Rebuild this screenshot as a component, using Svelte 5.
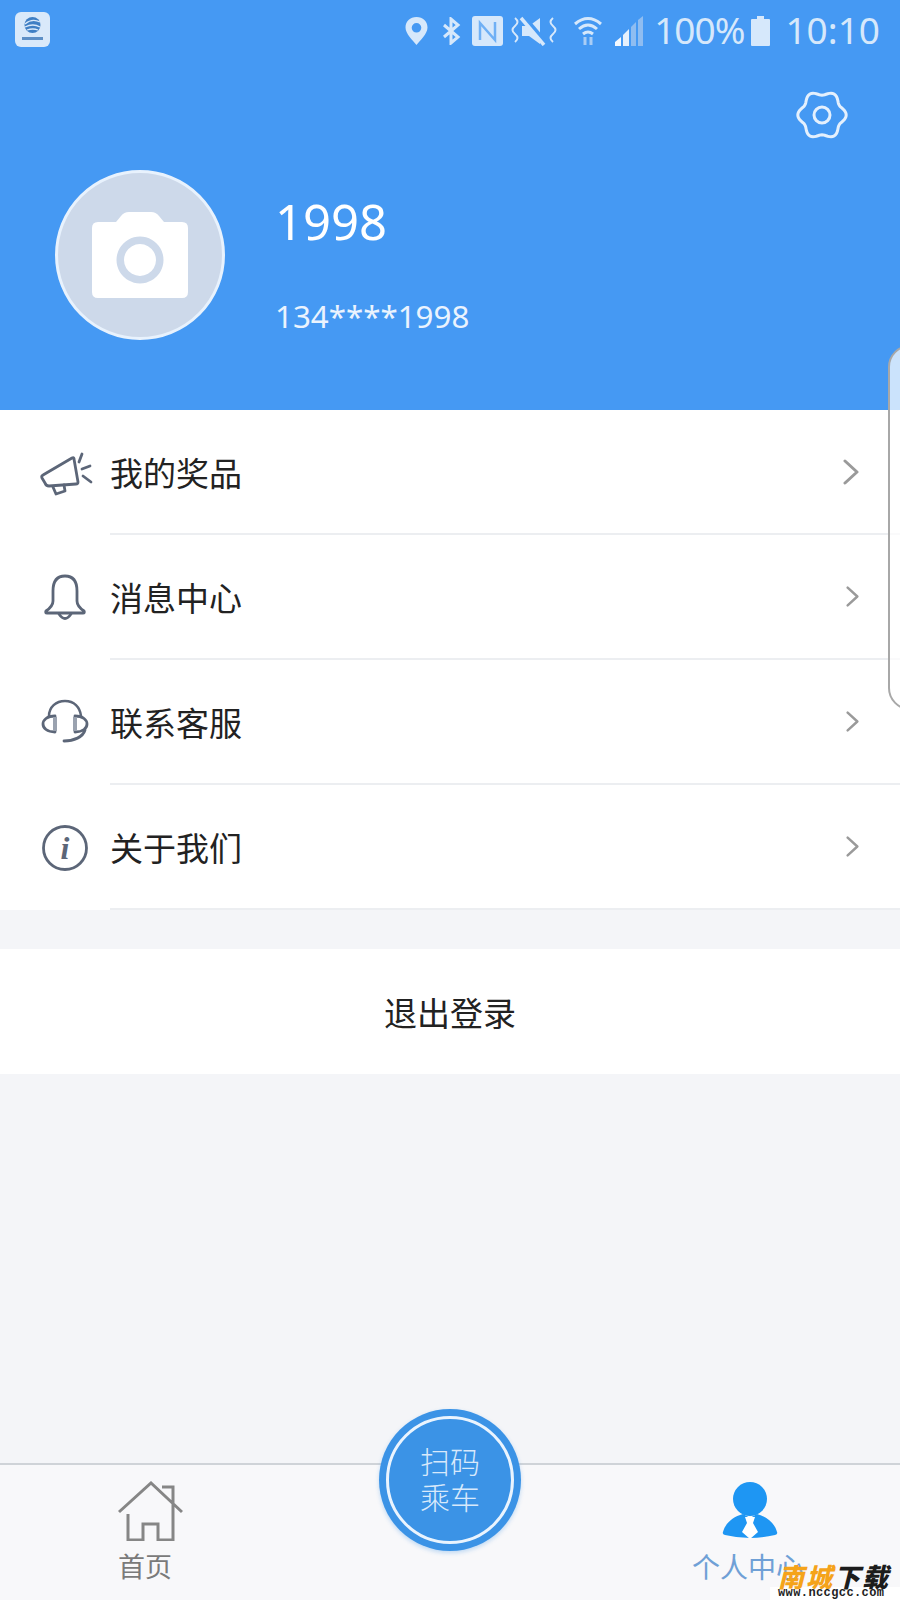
<script>
  const menu = [
    { label: '我的奖品', icon: 'horn', big: true },
    { label: '消息中心', icon: 'bell' },
    { label: '联系客服', icon: 'headset' },
    { label: '关于我们', icon: 'info' }
  ];

  // wavy outline of the settings gear
  function gearPath() {
    let d = '';
    for (let i = 0; i < 96; i++) {
      const a = (i / 96) * Math.PI * 2;
      const r = 22 + 2.2 * Math.cos(6 * a);
      d += (i ? 'L' : 'M') + (26 + r * Math.cos(a)).toFixed(2) + ' ' + (26 + r * Math.sin(a)).toFixed(2);
    }
    return d + 'Z';
  }
</script>

<div class="page">
  <header class="header">
    <div class="status">
      <div class="app-icon">
        <svg viewBox="0 0 35 35" width="35" height="35">
          <circle cx="17.500" cy="13" r="8" fill="#3f7fc4" />
          <path d="M10 12q7-6 15-2M10 15q8-4 15 0M12 18q6-2 11 0" stroke="#d9e9fa" stroke-width="1.300" fill="none" />
          <rect x="7" y="25" width="21" height="3" fill="#5d8fc6" />
        </svg>
      </div>
      <div class="status-right">
        <svg class="pin" viewBox="0 0 23 28" width="23" height="28">
          <path fill-rule="evenodd" d="M11.5 0C5 0 .5 4.6.5 10.5.5 17 8 23.500 11.500 28 15 23.500 22.500 17 22.500 10.500 22.500 4.600 18 0 11.500 0ZM11.500 6A4.800 4.800 0 1 1 11.500 15.600 4.800 4.800 0 0 1 11.500 6Z" fill="#d6e8fb" />
        </svg>
        <svg class="bt" viewBox="0 0 20 28" width="20" height="28">
          <path d="M3 8l14 12-7 6V2l7 6L3 20" fill="none" stroke="#d6e8fb" stroke-width="3" />
        </svg>
        <svg class="nfc" viewBox="0 0 31 30" width="31" height="30">
          <rect width="31" height="30" rx="3" fill="#d6e8fb" />
          <path d="M8 24V7l15 17V6" fill="none" stroke="#6fb0f5" stroke-width="2.500" />
        </svg>
        <svg class="mute" viewBox="0 0 46 30" width="46" height="30">
          <path d="M4 2q5 4 0 8t0 8 0 8M42 2q-5 4 0 8t0 8 0 8" fill="none" stroke="#d6e8fb" stroke-width="2" />
          <path d="M11 10h7l11-8v26l-11-8h-7Z" fill="#d6e8fb" />
          <path d="M12 1l22 26" stroke="#4599f3" stroke-width="6" />
          <path d="M10 2l23 27" stroke="#d6e8fb" stroke-width="3.500" />
        </svg>
        <svg class="wifi" viewBox="0 0 28 30" width="28" height="30">
          <path d="M1 8q13-11 26 0M5 13q9-8 18 0M9 18q5-4 10 0" fill="none" stroke="#d6e8fb" stroke-width="3" />
          <path d="M11 21v8M17 21v8" stroke="#a9cdf5" stroke-width="3" />
        </svg>
        <svg class="signal" viewBox="0 0 30 30" width="30" height="30">
          <path d="M0 30v-4l6-5v9Z" fill="#f3f8fe" />
          <path d="M8 30V19l6-6v17Z" fill="#e6f0fc" />
          <path d="M16 30V11l5-5v24Z" fill="#8fbdf1" />
          <path d="M23 30V4l5-4v30Z" fill="#8fbdf1" />
        </svg>
        <span class="pct">100%</span>
        <svg class="battery" viewBox="0 0 19 30" width="19" height="30">
          <path d="M6 0h7v3h5a1 1 0 0 1 1 1v25a1 1 0 0 1-1 1H1a1 1 0 0 1-1-1V4a1 1 0 0 1 1-1h5Z" fill="#d6e8fb" />
        </svg>
        <span class="time">10:10</span>
      </div>
    </div>

    <div class="gear-row">
      <svg viewBox="0 0 52 52" width="52" height="52">
        <path d={gearPath()} fill="none" stroke="#e4f0fd" stroke-width="3" />
        <circle cx="26" cy="26" r="8" fill="none" stroke="#e4f0fd" stroke-width="3" />
      </svg>
    </div>

    <div class="profile">
      <div class="avatar">
        <svg viewBox="0 0 96 86" width="96" height="86">
          <path fill-rule="evenodd" d="M6 10h18l5-6q3-4 8-4h22q5 0 8 4l5 6h18q6 0 6 6v64q0 6-6 6H6q-6 0-6-6V16q0-6 6-6ZM48 24.500a23.500 23.500 0 1 0 .01 0ZM48 32a16 16 0 1 1-.01 0Z" fill="#fff" />
        </svg>
      </div>
      <div class="who">
        <div class="name">1998</div>
        <div class="phone">134****1998</div>
      </div>
    </div>
  </header>

  <ul class="menu">
    {#each menu as item}
      <li class="row">
        <svg class="row-icon" viewBox="0 0 60 50" width="60" height="50">
          <g fill="none" stroke="#5c6678" stroke-width="2.800" stroke-linecap="round" stroke-linejoin="round">
            {#if item.icon === 'horn'}
              <g transform="translate(2 1)">
                <path d="M5 26 34 9q2-1 2 1l4 23q0 2-2 2L11 37q-3 0-4-3l-3-5q-1-2 1-3Z" />
                <path d="M15 38l3 7 9-3-1-6" />
                <path d="M44 5l-3 8M44 20l8-3M45 27l8 6" />
              </g>
            {:else if item.icon === 'bell'}
              <path d="M29 3C20 3 17 10 17 18V28C17 33 13 36 10 38Q9 40 11 40H47Q49 40 48 38C45 36 41 33 41 28V18C41 10 38 3 29 3Z" />
              <path d="M23 41Q29 50 35 41" />
            {:else if item.icon === 'headset'}
              <path d="M13 18C13 9 20 3 29 3S44 9 45 18" stroke-width="2.500" />
              <path d="M19 18C11 18 7 22 7 26s4 8 12 8Z" />
              <path d="M39 18C47 18 51 22 51 26s-4 8-12 8Z" />
              <path d="M19 19V33M39 19V33" stroke="#9aa2af" stroke-width="4" stroke-linecap="butt" />
              <path d="M49 32C47 39 38 43 28 43" />
            {:else}
              <circle cx="29" cy="25" r="21.500" />
              <text class="i-mark" x="29" y="36" text-anchor="middle">i</text>
            {/if}
          </g>
        </svg>
        <span class="row-label">{item.label}</span>
        <div class="row-line">
          <svg class="chev" class:big={item.big} viewBox="0 0 16 26" fill="none" stroke="#9a9a9a" stroke-width="3" stroke-linecap="round" stroke-linejoin="round">
            <path d="M2 2l12 11L2 24" />
          </svg>
        </div>
      </li>
    {/each}
  </ul>

  <button class="logout">退出登录</button>

  <div class="spacer"></div>

  <nav class="tabs">
    <div class="tab">
      <svg class="tab-icon home" viewBox="0 0 66 60" width="66" height="60">
        <path d="M2 31 34 2 65 31M45 6h11v25M11 33v26h15V43h15v16h15V31" fill="none" stroke="#868686" stroke-width="3" />
      </svg>
      <span class="tab-label">首页</span>
    </div>
    <div class="tab"></div>
    <div class="tab active">
      <svg class="tab-icon" viewBox="0 0 56 58" width="56" height="60">
        <circle cx="28" cy="17" r="17" fill="#1e96f3" />
        <path d="M21 32C10 35 3 42 1 50q-1 2 2 3 25 6 50 0 3-1 2-3C53 42 46 35 35 32L28 36Z" fill="#1e96f3" />
        <path d="M23 35h10l-2 6 5 9-8 7-8-7 5-9Z" fill="#fff" />
      </svg>
      <span class="tab-label">个人中心</span>
    </div>
    <button class="fab"><span class="fab-ring">扫码<br />乘车</span></button>
  </nav>

  <div class="edge"></div>

  <div class="mark">
    <div class="mark-title"><span class="orange">南城</span>下载</div>
    <div class="mark-url">www.nccgcc.com</div>
  </div>
</div>

<style>
  :global(body) {
    margin: 0;
    background: #f4f5f8;
  }

  .page {
    position: relative;
    width: 900px;
    height: 1600px;
    overflow: hidden;
    display: flex;
    flex-direction: column;
    background: #f4f5f8;
    font-family: "Noto Sans CJK SC", "Noto Sans", sans-serif;
  }

  .header {
    height: 410px;
    box-sizing: border-box;
    flex-shrink: 0;
    background: #4599f3;
    color: #fff;
    padding-top: 12px;
  }

  .status {
    display: flex;
    justify-content: space-between;
    height: 38px;
    padding: 0 20px 0 15px;
  }

  .app-icon {
    width: 35px;
    height: 35px;
    background: #d9e9fa;
    border-radius: 6px;
  }

  .status-right {
    display: flex;
    align-items: center;
    height: 38px;
    color: #d6e8fb;
    font-family: "Noto Sans", sans-serif;
    font-size: 37px;
  }

  .pin { margin-right: 13px; }
  .bt { margin-right: 11px; }
  .nfc { margin-right: 8px; }
  .mute { margin-right: 17px; }
  .wifi { margin-right: 13px; }
  .signal { margin-right: 9px; }
  .pct { margin: 0 7px 4px 0; letter-spacing: -1px; }
  .battery { margin-right: 15px; }
  .time { margin-bottom: 4px; }

  .gear-row {
    display: flex;
    justify-content: flex-end;
    padding: 39px 52px 0 0;
  }

  .profile {
    display: flex;
    align-items: center;
    padding-left: 55px;
    margin-top: 29px;
  }

  .avatar {
    width: 170px;
    height: 170px;
    box-sizing: border-box;
    border: 3px solid #e8f2fd;
    border-radius: 50%;
    background: #cdd9ea;
    display: flex;
    align-items: center;
    justify-content: center;
  }

  .who {
    margin-left: 50px;
    padding-top: 16px;
  }

  .name {
    font-size: 49px;
    line-height: 60px;
    font-family: "Noto Sans", sans-serif;
  }

  .phone {
    margin-top: 45px;
    font-size: 31.300px;
    line-height: 40px;
    color: #eaf3fe;
    font-family: "Noto Sans", sans-serif;
  }

  .menu {
    list-style: none;
    margin: 0;
    padding: 0;
    background: #fff;
    flex-shrink: 0;
  }

  .row {
    display: flex;
    align-items: center;
    height: 125px;
    box-sizing: border-box;
    padding-left: 36px;
    position: relative;
  }

  .row-icon {
    flex-shrink: 0;
  }

  .i-mark {
    font-family: "Liberation Serif", serif;
    font-style: italic;
    font-weight: bold;
    font-size: 32px;
    fill: #5c6678;
    stroke: none;
  }

  .row-label {
    margin: 0 0 2px 14px;
    font-size: 33px;
    color: #222;
  }

  .row-line {
    flex: 1;
    align-self: stretch;
    margin-left: -132px;
    border-bottom: 2px solid #eceef1;
    display: flex;
    align-items: center;
    justify-content: flex-end;
    padding-right: 41px;
  }

  .chev {
    width: 13px;
    height: 21px;
  }

  .chev.big {
    width: 16px;
    height: 28px;
  }

  .logout {
    display: block;
    width: 100%;
    height: 125px;
    margin-top: 39px;
    flex-shrink: 0;
    border: none;
    background: #fff;
    font-family: inherit;
    font-size: 33px;
    color: #222;
    padding: 0;
  }

  .spacer {
    flex: 1;
  }

  .tabs {
    position: relative;
    height: 137px;
    flex-shrink: 0;
    box-sizing: border-box;
    border-top: 2px solid #cfd3d8;
    background: #f8f8fa;
    display: grid;
    grid-template-columns: repeat(3, 1fr);
  }

  .tab {
    display: flex;
    flex-direction: column;
    align-items: center;
    padding-top: 16px;
  }

  .tab-icon {
    height: 60px;
    display: block;
  }

  .tab-label {
    margin-top: 7px;
    font-size: 27px;
    line-height: 36px;
    color: #7a7a7a;
  }

  .tab:first-child .tab-label {
    margin-right: 10px;
  }

  .tab.active .tab-label {
    font-size: 28px;
    color: #6fa0d6;
    margin-right: 4px;
  }

  .fab {
    position: absolute;
    left: 379px;
    top: -56px;
    width: 142px;
    height: 142px;
    padding: 7px;
    box-sizing: border-box;
    border: none;
    border-radius: 50%;
    background: #3b93e6;
    box-shadow: 0 2px 4px rgba(59, 147, 230, 0.3);
  }

  .fab-ring {
    display: flex;
    align-items: center;
    justify-content: center;
    width: 100%;
    height: 100%;
    box-sizing: border-box;
    border: 3px solid #eaf4fe;
    border-radius: 50%;
    padding-bottom: 4px;
    font-family: "Noto Sans CJK SC", sans-serif;
    font-weight: 300;
    font-size: 30px;
    line-height: 36px;
    color: #d8e9fb;
    text-align: center;
  }

  .edge {
    position: absolute;
    left: 888px;
    top: 345px;
    width: 30px;
    height: 365px;
    box-sizing: border-box;
    border: 2px solid #a8a8a8;
    border-radius: 22px 0 0 22px;
    background: rgba(255, 255, 255, 0.72);
  }

  .mark {
    position: absolute;
    left: 770px;
    top: 1567px;
    width: 130px;
    height: 33px;
    box-sizing: border-box;
    padding-left: 8px;
  }

  .mark-title {
    font-family: "Noto Sans CJK SC", sans-serif;
    font-weight: 900;
    font-style: italic;
    font-size: 26px;
    line-height: 22px;
    margin-top: -2px;
    letter-spacing: 2px;
    color: #1c1c1c;
    white-space: nowrap;
  }

  .orange {
    color: #f5a31a;
  }

  .mark-url {
    margin-left: -8px;
    padding-left: 8px;
    background: #fff;
    font-family: "Liberation Mono", monospace;
    font-weight: bold;
    font-size: 12px;
    line-height: 13px;
    letter-spacing: 0.4px;
    color: #222;
    white-space: nowrap;
  }
</style>
